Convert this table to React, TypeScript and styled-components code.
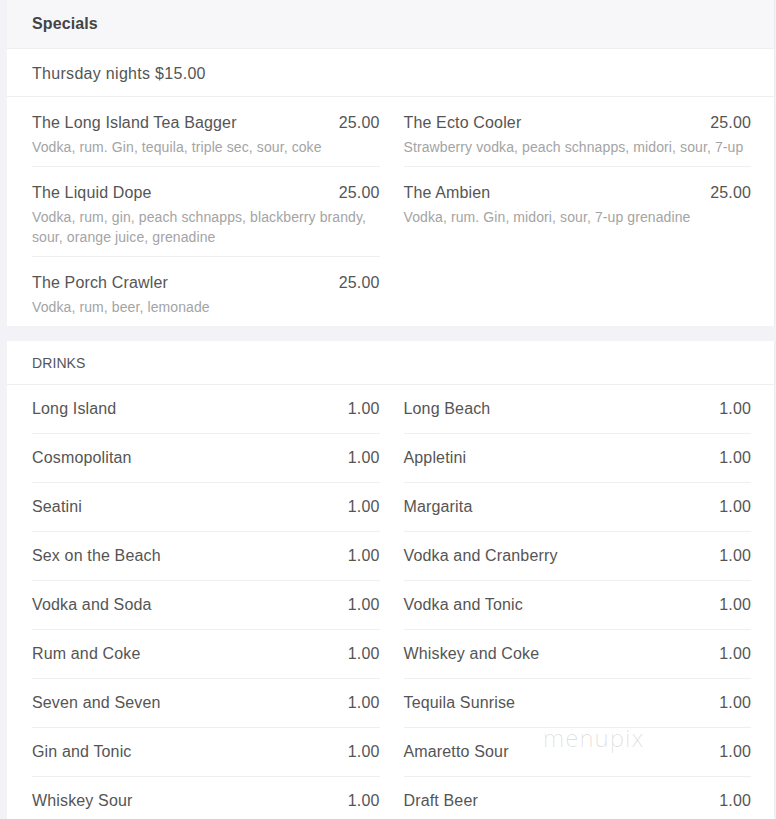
import {createGlobalStyle} from 'styled-components';
import styled from 'styled-components';

const GlobalStyle = createGlobalStyle`
	html, body {
		margin: 0;
		padding: 0;
		background: #f2f2f7;
	}

	body {
		font-family: "Liberation Sans", Arial, sans-serif;
		-webkit-font-smoothing: antialiased;
	}
`;

type Special = {
	readonly name: string;
	readonly price: string;
	readonly description: string;
};

type Drink = {
	readonly name: string;
	readonly price: string;
};

const specialsLeft: Special[] = [
	{name: 'The Long Island Tea Bagger', price: '25.00', description: 'Vodka, rum. Gin, tequila, triple sec, sour, coke'},
	{name: 'The Liquid Dope', price: '25.00', description: 'Vodka, rum, gin, peach schnapps, blackberry brandy, sour, orange juice, grenadine'},
	{name: 'The Porch Crawler', price: '25.00', description: 'Vodka, rum, beer, lemonade'},
];

const specialsRight: Special[] = [
	{name: 'The Ecto Cooler', price: '25.00', description: 'Strawberry vodka, peach schnapps, midori, sour, 7-up'},
	{name: 'The Ambien', price: '25.00', description: 'Vodka, rum. Gin, midori, sour, 7-up grenadine'},
];

const drinks: Drink[] = [
	{name: 'Long Island', price: '1.00'},
	{name: 'Long Beach', price: '1.00'},
	{name: 'Cosmopolitan', price: '1.00'},
	{name: 'Appletini', price: '1.00'},
	{name: 'Seatini', price: '1.00'},
	{name: 'Margarita', price: '1.00'},
	{name: 'Sex on the Beach', price: '1.00'},
	{name: 'Vodka and Cranberry', price: '1.00'},
	{name: 'Vodka and Soda', price: '1.00'},
	{name: 'Vodka and Tonic', price: '1.00'},
	{name: 'Rum and Coke', price: '1.00'},
	{name: 'Whiskey and Coke', price: '1.00'},
	{name: 'Seven and Seven', price: '1.00'},
	{name: 'Tequila Sunrise', price: '1.00'},
	{name: 'Gin and Tonic', price: '1.00'},
	{name: 'Amaretto Sour', price: '1.00'},
	{name: 'Whiskey Sour', price: '1.00'},
	{name: 'Draft Beer', price: '1.00'},
];

const Page = styled.div`
	display: flex;
	flex-direction: column;
	gap: 15px;
	padding: 0 1px 0 7px;
`;

const Card = styled.section`
	position: relative;
	background: #fff;
	border-right: 1px solid #ececf0;
	overflow: hidden;
`;

const CardHeader = styled.header`
	height: 48px;
	display: flex;
	align-items: center;
	padding: 0 25px;
	background: #f7f7fa;
	border-bottom: 1px solid #efeff2;
	font-size: 16px;
	font-weight: 700;
	color: #444;
	letter-spacing: 0.1px;
`;

const SubRow = styled.div`
	box-sizing: border-box;
	height: 48px;
	display: flex;
	align-items: center;
	padding: 2px 25px 0;
	border-bottom: 1px solid #efeff2;
	font-size: 16px;
	color: #555;
	letter-spacing: 0.3px;
`;

const CategoryTitle = styled.div`
	height: 43px;
	display: flex;
	align-items: center;
	padding: 0 25px;
	border-bottom: 1px solid #efeff2;
	font-size: 14px;
	color: #555;
	text-transform: uppercase;
	letter-spacing: 0.1px;
`;

const Columns = styled.div`
	display: grid;
	grid-template-columns: 1fr 1fr;
	column-gap: 24px;
	padding: 0 23px 0 25px;
`;

const Column = styled.div`
	display: flex;
	flex-direction: column;
`;

const SpecialItem = styled.div`
	padding: 16px 0 9px;
	border-bottom: 1px solid #efeff2;

	&:last-child {
		border-bottom: none;
	}
`;

const ItemLine = styled.div`
	display: flex;
	justify-content: space-between;
	align-items: baseline;
	gap: 16px;
	font-size: 16px;
	line-height: 20px;
	color: #555;
	letter-spacing: 0.15px;
`;

const Description = styled.div`
	margin-top: 4px;
	font-size: 14px;
	line-height: 20px;
	color: #a4a4a4;
	letter-spacing: 0.1px;
`;

const DrinkRow = styled(ItemLine)`
	padding: 14px 0;
	border-bottom: 1px solid #efeff2;
`;

const Watermark = styled.div`
	position: absolute;
	left: 536px;
	top: 380px;
	font-family: "Open Sans", "DejaVu Sans", sans-serif;
	font-weight: 300;
	font-size: 24px;
	letter-spacing: 1px;
	color: rgba(0, 0, 0, 0.13);
	pointer-events: none;
`;

const SpecialList = ({items}: {readonly items: Special[]}) => (
	<Column>
		{items.map(item => (
			<SpecialItem key={item.name}>
				<ItemLine>
					<span>{item.name}</span>
					<span>{item.price}</span>
				</ItemLine>
				<Description>{item.description}</Description>
			</SpecialItem>
		))}
	</Column>
);

export default function App() {
	return (
		<>
			<GlobalStyle/>
			<Page>
				<Card>
					<CardHeader>Specials</CardHeader>
					<SubRow>Thursday nights $15.00</SubRow>
					<Columns>
						<SpecialList items={specialsLeft}/>
						<SpecialList items={specialsRight}/>
					</Columns>
				</Card>
				<Card>
					<CategoryTitle>Drinks</CategoryTitle>
					<Columns>
						{drinks.map(drink => (
							<DrinkRow key={drink.name}>
								<span>{drink.name}</span>
								<span>{drink.price}</span>
							</DrinkRow>
						))}
					</Columns>
					<Watermark>menupix</Watermark>
				</Card>
			</Page>
		</>
	);
}
